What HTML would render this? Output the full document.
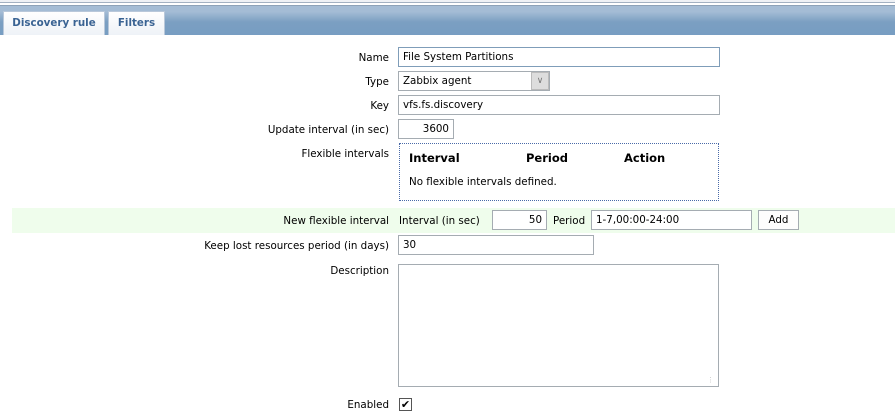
<!DOCTYPE html>
<html><head><style>
*{box-sizing:border-box;margin:0;padding:0}
body{width:895px;height:420px;background:#fff;font-family:"DejaVu Sans",Verdana,sans-serif;font-size:10.3px;color:#000;position:relative;overflow:hidden}
.a{position:absolute;white-space:nowrap}
.lbl{position:absolute;right:506px;white-space:nowrap}
.in{position:absolute;border:1px solid #a5acb2;background:#fff;height:20px;padding:3px 4px;white-space:nowrap;line-height:12px}
.tab{position:absolute;top:11px;height:24px;background:linear-gradient(#fff,#eef2f7);border:1px solid #b9c8da;border-bottom:none;color:#3a6393;font-weight:bold;font-size:10.3px;padding-top:5px;text-align:center}
</style></head><body>
<div class="a" style="left:0;top:0;width:895px;height:2px;background:#eef1f5"></div>
<div class="a" style="left:0;top:2px;width:895px;height:1px;background:#a3b1c2"></div>
<div class="a" style="left:0;top:5px;width:895px;height:1px;background:#8da2b8"></div>
<div class="a" style="left:0;top:6px;width:895px;height:29px;background:linear-gradient(#a4bcd5 0%,#a4bcd5 20%,#7b9fc2 55%,#779dc2 100%)"></div>
<div class="tab" style="left:3px;width:102px">Discovery rule</div>
<div class="tab" style="left:108px;width:57px">Filters</div>

<div class="lbl" style="top:52px">Name</div>
<div class="in" style="left:398px;top:47px;width:322px;border-color:#7f9db9">File System Partitions</div>

<div class="lbl" style="top:76px">Type</div>
<div class="in" style="left:398px;top:71px;width:152px">Zabbix agent</div>
<div class="a" style="left:531px;top:72px;width:18px;height:18px;background:#ddd;border:1px solid #bbb;color:#777;text-align:center;font-size:9px;line-height:16px">&#8744;</div>

<div class="lbl" style="top:100px">Key</div>
<div class="in" style="left:398px;top:95px;width:322px">vfs.fs.discovery</div>

<div class="lbl" style="top:124px">Update interval (in sec)</div>
<div class="in" style="left:398px;top:119px;width:56px;text-align:right">3600</div>

<div class="lbl" style="top:148px">Flexible intervals</div>
<div class="a" style="left:399px;top:143px;width:320px;height:58px;border:1px dotted #4a6aa8"></div>
<div class="a" style="left:409px;top:151px;font-weight:bold;font-size:11.5px">Interval</div>
<div class="a" style="left:526px;top:151px;font-weight:bold;font-size:11.5px">Period</div>
<div class="a" style="left:624px;top:151px;font-weight:bold;font-size:11.5px">Action</div>
<div class="a" style="left:409px;top:176px">No flexible intervals defined.</div>

<div class="a" style="left:12px;top:208px;width:883px;height:25px;background:#effdec"></div>
<div class="lbl" style="top:215px">New flexible interval</div>
<div class="a" style="left:399px;top:215px">Interval (in sec)</div>
<div class="in" style="left:492px;top:210px;width:55px;text-align:right">50</div>
<div class="a" style="left:553px;top:215px">Period</div>
<div class="in" style="left:591px;top:210px;width:161px">1-7,00:00-24:00</div>
<div class="in" style="left:758px;top:210px;width:41px;text-align:center;background:#fdfdfd">Add</div>

<div class="lbl" style="top:240px">Keep lost resources period (in days)</div>
<div class="in" style="left:398px;top:235px;width:196px">30</div>

<div class="lbl" style="top:265px">Description</div>
<div class="in" style="left:398px;top:264px;width:321px;height:123px"></div>
<div class="a" style="left:707px;top:376px;color:#bbb;font-size:7px">&#8942;</div>

<div class="lbl" style="top:399px">Enabled</div>
<div class="a" style="left:399px;top:398px;width:13px;height:13px;border:1px solid #555;font-size:11px;line-height:11px;text-align:center;font-weight:bold">&#10004;</div>
</body></html>
